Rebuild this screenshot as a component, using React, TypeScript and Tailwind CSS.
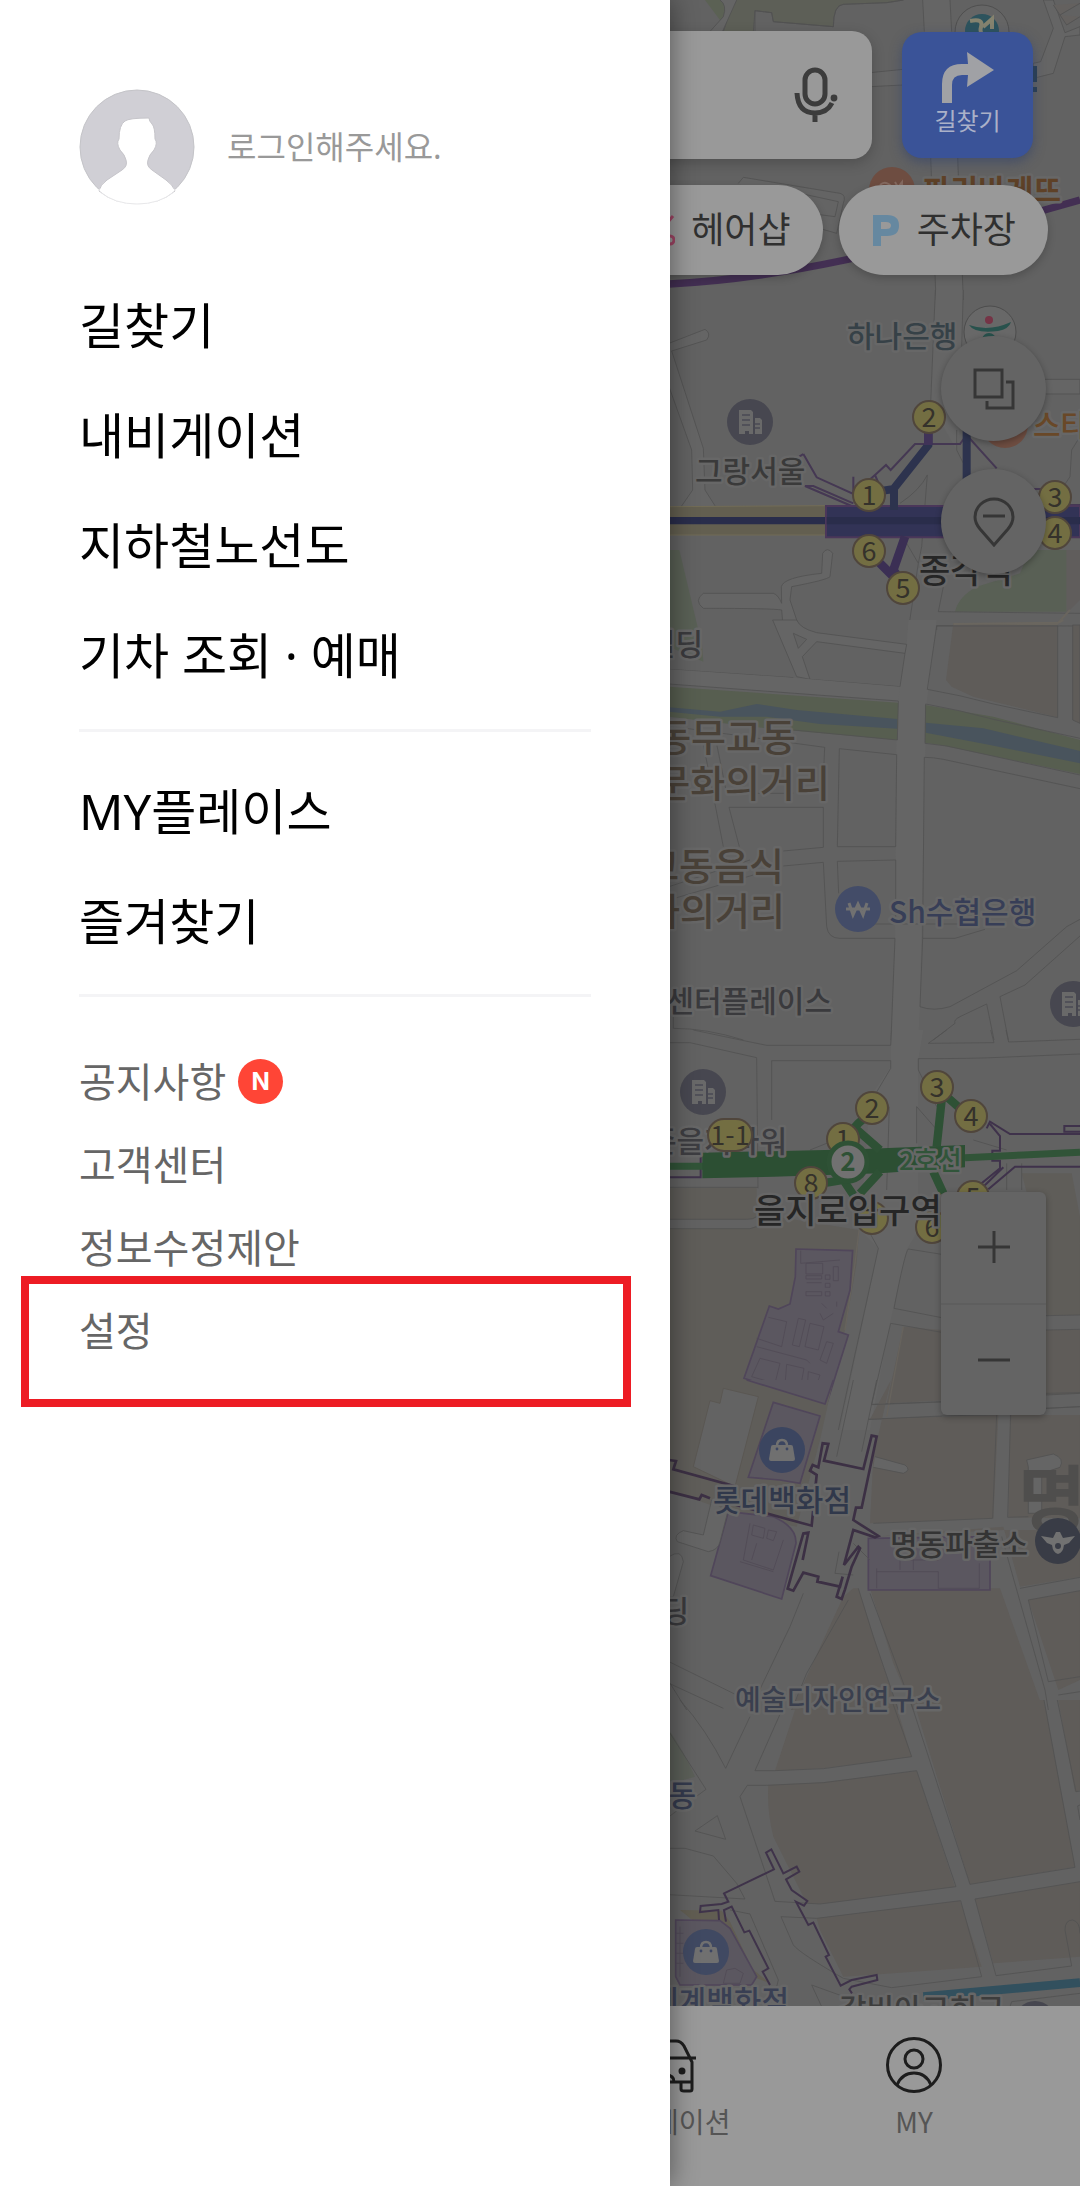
import type { ReactNode } from 'react'

const mainMenu = ['길찾기', '내비게이션', '지하철노선도', '기차 조회 · 예매']
const myMenu = ['MY플레이스', '즐겨찾기']

type Exit = { n: string; x: number; y: number }

const exits: Exit[] = [
  { n: '2', x: 929, y: 417 },
  { n: '1', x: 869, y: 495 },
  { n: '6', x: 869, y: 551 },
  { n: '5', x: 903, y: 588 },
  { n: '3', x: 1055, y: 497 },
  { n: '4', x: 1055, y: 533 },
  { n: '3', x: 937, y: 1087 },
  { n: '2', x: 872, y: 1108 },
  { n: '4', x: 971, y: 1116 },
  { n: '1', x: 843, y: 1139 },
  { n: '8', x: 811, y: 1183 },
  { n: '5', x: 973, y: 1197 },
  { n: '7', x: 872, y: 1218 },
  { n: '6', x: 932, y: 1227 },
]

type Label = { text: string; x: number; y: number; size: number; color: string; end?: boolean; bold?: boolean }

const labels: Label[] = [
  { text: '파리바게뜨', x: 923, y: 201, size: 30, color: '#5e4127', bold: true },
  { text: '하나은행', x: 847, y: 347, size: 30, color: '#364147' },
  { text: '그랑서울', x: 695, y: 482, size: 30, color: '#3a3a3a' },
  { text: '스타벅스', x: 1033, y: 436, size: 30, color: '#694828' },
  { text: '종각역', x: 919, y: 583, size: 34, color: '#262626' },
  { text: '빌딩', x: 703, y: 655, size: 30, color: '#3a3a3d', end: true },
  { text: '동무교동', x: 796, y: 751, size: 38, color: '#494138', end: true },
  { text: '문화의거리', x: 830, y: 797, size: 38, color: '#494138', end: true },
  { text: '교동음식', x: 784, y: 880, size: 38, color: '#494138', end: true },
  { text: '문화의거리', x: 785, y: 925, size: 38, color: '#494138', end: true },
  { text: 'Sh수협은행', x: 889, y: 923, size: 30, color: '#373e57' },
  { text: '센터플레이스', x: 832, y: 1012, size: 30, color: '#3a3a3d', end: true },
  { text: '존을지타워', x: 787, y: 1152, size: 30, color: '#3d3d41', end: true },
  { text: '롯데백화점', x: 713, y: 1511, size: 30, color: '#30384b' },
  { text: '명동파출소', x: 890, y: 1555, size: 30, color: '#343434' },
  { text: '빌딩', x: 689, y: 1622, size: 30, color: '#3a3a3d', end: true },
  { text: '예술디자인연구소', x: 735, y: 1710, size: 28, color: '#3a3f4e' },
  { text: '명동', x: 696, y: 1806, size: 30, color: '#343a4d', end: true },
  { text: '신세계백화점', x: 789, y: 2012, size: 30, color: '#393f53', end: true },
  { text: '갈비아고희구', x: 839, y: 2020, size: 30, color: '#3d3d3d' },
]

function MapLabel({ text, x, y, size, color, end, bold }: Label) {
  return (
    <text
      x={x}
      y={y}
      fontSize={size}
      fill={color}
      textAnchor={end ? 'end' : 'start'}
      fontWeight={bold ? 700 : 500}
      stroke="#676767"
      strokeWidth="5"
      strokeLinejoin="round"
      paintOrder="stroke"
    >
      {text}
    </text>
  )
}

function Pin({ x, y, color, children }: { x: number; y: number; color: string; children: ReactNode }) {
  return (
    <g transform={`translate(${x} ${y})`}>
      <circle r="23" fill={color} />
      {children}
    </g>
  )
}

const buildingIcon = (
  <>
    <path d="M-11-12H1L3-10V12H-1V9H-5V12H-11ZM5-4H10L12-2V12H5Z" fill="#696969" />
    <path d="M-8-7H0M-8-2H0M-8 3H0M5 2H10M5 6H10" stroke="#4a4a54" strokeWidth="1.6" />
  </>
)

const bagIcon = (
  <>
    <path d="M-9-5H9Q11-5 11-3L13 9Q13 11 11 11H-11Q-13 11-13 9L-11-3Q-11-5-9-5Z" fill="#707070" />
    <path d="M-5-4Q-5-10 0-10Q5-10 5-4" fill="none" stroke="#707070" strokeWidth="2.5" />
    <circle cx="-5" cy="-1" r="1.4" fill="#3c4663" />
    <circle cx="5" cy="-1" r="1.4" fill="#3c4663" />
  </>
)

function CityMap() {
  return (
    <svg
      className="absolute inset-0 h-full w-full"
      viewBox="0 0 1080 2186"
      preserveAspectRatio="xMaxYMin slice"
      aria-hidden="true"
    >
      <rect width="1080" height="2186" fill="#626262" />

      {/* north: park and search area */}
      <g transform="translate(640 0) scale(.33333)" stroke="#525252" strokeWidth="2.5" fill="#626262">
        <path d="M195 0L240 60L215 130L285 0Z" fill="#5b6154" stroke="none" />
        <path d="M280 0L250 95H340L345 32L395 38L400 65L580 80Q580 15 610 13L740 8L790 0" fill="#5d5f57" />
        <path d="M240 0Q262 15 250 50L205 100H245L290 0Z" fill="#656565" stroke="none" />
        <path d="M240 0Q262 15 250 50L205 100M290 0L245 100M345 95L345 32L395 38L400 65L580 80Q580 15 610 13L740 8L790 0" fill="none" />
        <path d="M848 0H930L970 900H888L870 470Z" fill="#656565" stroke="none" />
        <path d="M848 0L853 95M930 0L935 95M872 470L888 900M953 470L970 900" fill="none" />
        <path d="M690 218L790 208V255L690 260Z" fill="#656565" />
        <path d="M1180 190L1202 185L1240 85L1210 0H1240L1275 98L1320 80V105L1275 110L1240 220L1180 235Z" fill="#656565" />
        <path d="M1240 15L1260 45L1320 10M1260 45L1280 75L1320 50" fill="#64615f" />
        <path d="M295 550L310 532L600 580Q620 585 610 610L590 700L520 680M480 580L595 605L585 650L510 640" fill="#646464" />
        <path d="M87 852Q330 840 615 780T1320 600" fill="none" stroke="#432f53" strokeWidth="22" />
      </g>

      {/* Jonggak station */}
      <g transform="translate(640 290) scale(.33333)" stroke="#525252" strokeWidth="2.5" fill="none">
        <path d="M888 0H968V340L950 480L870 340Z" fill="#656565" stroke="none" />
        <path d="M886 0L872 340M970 0L965 170M950 420V480L970 520" />
        <path d="M87 290L155 480L158 600L120 655H230L195 600L190 475L95 183L200 150Q215 130 195 118L87 160Z" fill="#656565" />
        <path d="M1200 268H1320V312H1200" fill="#656565" />
        <path d="M1320 440L1295 480L1290 560L1250 620" />
        <path d="M87 780H118L175 1020H87Z" fill="#596055" stroke="none" />
        <path d="M430 1020L425 960Q400 955 190 955Q160 932 190 910H400Q415 915 425 940L424 890Q430 862 545 850L548 790Q562 768 578 790L570 860Q560 870 455 890L450 930L480 1020" fill="#656565" />
        <path d="M780 640Q840 600 862 555L845 770L835 820L800 760M835 820L805 1020" />
        <path d="M945 965Q955 920 1010 890L1140 850L1170 780H1280V965Z" fill="#596055" stroke="none" />
        <path d="M1280 780H1320V930L1280 970Z" fill="#605d5c" stroke="none" />
        <path d="M910 890L895 965L1320 970M890 1020V1007L1320 1008" />
        <path d="M940 1003H1250L1290 960" stroke="#69655e" strokeWidth="6" />
        <path d="M87 650L560 647H1320V735H87Z" fill="#635f50" stroke="#726c56" strokeWidth="3" />
        <path d="M635 648L495 588H520L640 640M490 492L530 562L640 612V560M640 612L705 555L738 525L752 540L825 462H960L980 435L1070 535M705 555L720 590M1180 597H1240V645H1320M490 492L478 500" stroke="#453853" strokeWidth="6" />
        <path d="M87 692H560" stroke="#292d4b" strokeWidth="22" />
        <path d="M558 648H1320V742H558Z" fill="#323356" stroke="#4b375a" strokeWidth="6" />
        <path d="M560 692H1320" stroke="#2a2d4b" strokeWidth="22" />
        <path d="M762 660V595L865 465V420M710 605L762 597M980 420V600" stroke="#2d334e" strokeWidth="24" />
        <path d="M795 740L760 840L790 880M715 815L760 860" stroke="#3b2f54" strokeWidth="26" />
        <path d="M865 465V420" stroke="#403358" strokeWidth="26" />
      </g>

      {/* Cheonggyecheon and Mugyo-dong */}
      <g transform="translate(640 620) scale(.33333)" stroke="#525252" strokeWidth="2.5" fill="#626262">
        <path d="M805 0H890L860 250L850 640L840 1160L835 1260H753L765 955L770 240L800 70Z" fill="#656565" stroke="none" />
        <path d="M398 0L470 170L510 178L487 110L530 65L795 100L800 73L530 38Q480 25 470 0Z" fill="#656565" />
        <path d="M460 40L500 58L475 85Z" />
        <path d="M87 80L190 125L185 60L150 0H87Z" fill="#596055" stroke="none" />
        <path d="M87 148L460 173M510 178L780 200L795 100" fill="none" />
        <path d="M87 148L460 173L780 200L775 243L87 192Z" fill="#656565" stroke="none" />
        <path d="M87 200L775 248L772 360L380 325L87 290Z" fill="#575e50" stroke="none" />
        <path d="M87 262L240 275L350 252L470 270L772 297V326L540 312L380 290L240 290L87 275Z" fill="#49545d" stroke="none" />
        <path d="M855 255L1060 290L1320 360V462L900 375L855 368Z" fill="#575e50" stroke="none" />
        <path d="M857 308L1030 325L1320 393V430L1050 375L857 338Z" fill="#49545d" stroke="none" />
        <path d="M940 10L1253 18V292L1000 230L935 200L918 180Z" fill="#5f5c59" stroke="none" />
        <path d="M1298 15H1320V310L1298 300Z" fill="#5f5c59" />
        <path d="M87 192L775 243L772 360L460 330M862 208Q960 225 1060 252L1253 293V18H890L862 208M857 252Q960 270 1060 298L1320 355M857 252L855 370L920 378L1320 465M1320 506L910 418Q880 412 853 412L848 955L945 955L1035 928" fill="none" />
        <path d="M940 12L1255 8L1270 0" stroke="#6a665f" fill="none" strokeWidth="6" />
        <path d="M87 318L480 372L554 382L552 430M598 386L770 404L767 680H592ZM592 724L767 720V900M592 724L596 820M267 562H550V682L430 693M267 562L298 680M430 738L550 727L560 920Q565 955 600 955H765L753 1260M848 955L840 1160Q880 1175 930 1160L1130 1052L1280 920L1320 898M880 1260L945 1210Q940 1200 960 1190L1040 1152L1062 1260M1105 1260L1080 1130L1155 1095L1320 948" fill="none" />
        <path d="M190 372L250 680M230 372L260 520H460M87 800L330 720M87 840L340 765M700 912H970M100 1180V1225Q200 1225 310 1260" fill="none" />
      </g>

      {/* Euljiro 1-ga */}
      <g transform="translate(640 1030) scale(.33333)" stroke="#525252" strokeWidth="2.5" fill="none">
        <path d="M753 0L752 110L690 200L660 600L715 655L600 1200H690L750 880L800 660L835 600V90L850 0Z" fill="#656565" stroke="none" />
        <path d="M87 475L350 472V560L340 568H87ZM87 596H330L410 560L657 600L650 700L615 900L555 1120L540 1200L87 1200Z" fill="#5f5d59" stroke="none" />
        <path d="M1145 430H1295L1320 560V855H1220L1200 640Z" fill="#5f5d59" stroke="none" />
        <path d="M790 890L905 900H1320V1090L740 1120Z" fill="#5f5c59" stroke="none" />
        <path d="M160 0Q300 30 380 46H752L755 0M87 38H150L350 83L354 475M395 270V92H752V115L690 220M865 40L920 0M1052 0L1062 38L865 40M1098 0L1106 36L1320 28M835 86Q1000 86 1080 82L1320 72M835 86V120L890 230M748 230L740 480M830 230V340M510 360L660 300M830 230L900 310M87 472H354M87 568H320Q340 568 350 560M87 596H330Q360 590 380 575M690 610L715 655L595 1200M1000 330L1100 360M1100 400V480M1145 400V480" />
        <path d="M905 673L805 657Q795 665 762 835L905 863M905 907L752 880L695 1123L905 1115M685 1168L905 1160M1218 857L1320 855M1218 900L1320 898M1218 1095L1320 1090M1218 1135L1320 1130M1070 1150V1200M1112 1150V1200" />
        <path d="M657 600L645 700L615 900M790 890L740 1160" stroke="#67635d" strokeWidth="4" />
        <path d="M468 657L638 662L630 780L595 905L625 915L560 1122L312 1045L388 828L415 837L450 822L466 740Z" fill="#5b5760" stroke="#50465a" strokeWidth="5" />
        <path d="M498 700H548V732H498ZM498 737H545V747H498ZM556 735H570V748H556ZM580 710H595V752H580ZM500 758H545M556 760H570V772H556ZM498 785H545V797H498ZM556 785H570V798H556ZM482 662V700L600 690M385 862L440 875L425 950L350 925M475 865L497 870L478 950L457 945ZM510 880L552 890L535 960L495 950ZM560 935L580 940L560 1000L540 990ZM360 985L420 1000L405 1060L335 1040ZM440 1003L492 1015L480 1080L435 1065ZM505 1025L540 1035L530 1065L503 1055ZM350 950L500 990L510 1000M540 850L550 870L580 850M545 820L560 835M590 815V830" stroke="#514a56" />
        <path d="M250 1075L355 1105L330 1200H200L215 1110L243 1118Z" fill="#626262" stroke="#57534c" />
        <path d="M400 1117L540 1160L530 1200H372Z" fill="#5b5760" stroke="#50465a" strokeWidth="5" />
        <path d="M87 442H182V370M1040 295L1050 275L1110 312H1320M1320 305H1273V288H1320M1050 282L1080 318V362H1057V392H1080V415L1000 480M1320 410H1125L1045 478M1090 412L1030 470" stroke="#3f324b" strokeWidth="6" />
        <path d="M87 409H190M975 383L1150 375L1320 367" stroke="#315438" strokeWidth="21" />
        <path d="M187 368L650 358L975 345V412L720 430L400 440L187 445Z" fill="#2c4f33" stroke="none" />
        <path d="M600 340L655 280L690 250M640 290L720 360M905 210L890 350M920 200L960 235M560 458L610 450L640 495M720 425L660 490M880 425L910 490" stroke="#2e5135" strokeWidth="25" />
      </g>

      {/* Lotte department store, Myeongdong */}
      <g transform="translate(640 1380) scale(.33333)" stroke="#525252" strokeWidth="2.5" fill="none">
        <path d="M87 0H580L540 180L470 440L280 400L87 330Z" fill="#5f5d59" stroke="none" />
        <path d="M250 25L355 50L285 320L160 260L210 62L240 70Z" fill="#636363" stroke="#595650" />
        <path d="M753 0L700 230L690 430L1060 415L1075 105L690 118M1110 105H1320V415L1105 412Z" fill="#5f5c59" stroke="none" />
        <path d="M700 470L1090 440L1140 620L1320 590V450H1090M1165 660L1320 632V900L1255 930ZM610 650L640 625H655L740 890L775 990H455Q540 800 610 650ZM690 625H1080L1210 990H820L760 850Z" fill="#5f5c59" stroke="none" />
        <path d="M640 0L590 230M710 0L665 215M695 74L903 66M685 118L903 108L1070 104L1058 415L700 430M1112 104L1103 412L1165 410M1218 40L1320 38M1218 85L1320 80M490 640L450 740L330 990M625 660L500 880L455 990M655 625L700 770L775 990M690 640L820 990M1085 470L1215 930L1225 990M1140 625L1320 592M1165 660L1320 632M1165 660L1225 905L1320 890M1255 945L1320 935M87 845L300 950M87 910L250 985M87 905L140 990" />
        <path d="M320 0L555 72L580 0M400 67L540 108L480 310L420 300L325 292Z" fill="#5b5760" stroke="#50465a" strokeWidth="5" />
        <path d="M265 395L400 410Q470 440 468 490L425 657L212 587Z" fill="#5b5760" stroke="#50465a" strokeWidth="5" />
        <path d="M685 475L1050 470V630H685Z" fill="#5b5760" stroke="#50465a" strokeWidth="5" />
        <path d="M340 435L375 445L370 475L335 465ZM385 450L410 455L400 482L380 475ZM330 430L310 540L400 570L430 480M300 545L400 575M350 490L335 540M710 565V625M710 575H895V625H1018V550M780 570V540H895M820 520V570" stroke="#514a56" />
        <path d="M705 230L795 255Q815 270 790 280L700 262M1160 240L1240 222Q1275 235 1260 262L1205 280V400H1165V260Z" fill="#656565" />
        <path d="M215 360L190 465L130 452Q98 465 112 485L205 515Q235 510 240 485L262 400M87 530Q125 505 130 545L100 650H87" fill="#656565" />
        <path d="M597 515L585 580L640 585M640 490L690 540" />
        <path d="M87 240L108 243L100 268L290 320M87 335L178 358L185 345L210 355M270 370L515 437L530 285L510 272L518 255L535 262L548 190L565 192L552 242L670 267L695 167L710 170L665 383H648L640 420L715 468L705 472L640 450L612 555L655 500L660 505L635 560L615 628L605 657L590 650L608 590L600 620L532 605L535 590L490 578L460 632L443 626L490 460L505 458L488 540" stroke="#3c3044" strokeWidth="8" />
      </g>

      {/* Shinsegae and south */}
      <g transform="translate(640 1700) scale(.33333)" stroke="#525252" strokeWidth="2.5" fill="#5f5c59">
        <path d="M465 30L770 20L815 170L550 205L405 212ZM385 255L550 247L830 213L945 560L540 612L500 610L400 410Q380 330 385 255ZM820 0H1212L1305 500L990 553ZM1255 0H1320V270L1305 275ZM530 655L960 602L1025 800L760 820L610 830L540 690ZM1005 597L1320 545V770L1060 790Z" stroke="none" />
        <path d="M87 90Q130 150 165 230L130 240L87 245Z" fill="#5b5f58" stroke="none" />
        <path d="M120 0Q200 90 257 205L330 50M430 20L345 212L405 212L550 206L815 170L755 0M87 95L198 268L87 350M165 393L232 347L257 418ZM87 445H135L220 468L290 550L315 597L87 584M322 256H380L550 248L830 212L948 560L540 612L405 604L300 290ZM810 0L990 553L1305 502L1212 0M1252 0L1308 275L1320 273M1320 315L1313 318L1320 360M1005 597L1320 545M1005 597L1068 827L1295 798L1275 690Q1275 660 1298 660Q1320 665 1320 700M962 602L1025 830L755 863L610 835Q480 760 460 735L423 650L530 655L962 602M270 630L330 642L415 840L410 860M515 855L640 900M515 855L545 920M1115 905L1320 880M1115 905L1110 920" fill="none" />
        <path d="M120 630L245 632L270 665L350 835L390 850" fill="#615d52" stroke="none" />
        <path d="M107 660L240 662L270 685L350 830L335 855H120L107 830Z" fill="#5b5760" stroke="#50465a" strokeWidth="5" />
        <path d="M120 680V830M107 700H130M107 730H130M107 760H130M107 790H130M260 810L285 805L310 820L300 850H250Z" fill="none" stroke="#514a56" />
        <path d="M390 855L368 815L385 805L328 692L313 697L275 620L252 630L258 665M237 660L235 630L180 636L182 618L245 612L265 605L252 580L402 508L378 458L394 448L430 520L470 500L478 515L438 538L455 570L502 603L492 617L468 605L505 675L520 668L567 765L557 770L602 857L635 840L710 825L712 840L635 860L628 868L636 880" fill="none" stroke="#3f334a" strokeWidth="6" />
        <path d="M850 890Q1080 870 1320 848" fill="none" stroke="#32505e" strokeWidth="26" />
        <circle cx="1185" cy="965" r="62" fill="#46464f" stroke="none" />
      </g>

      {/* brand markers */}
      <circle cx="982" cy="32" r="27" fill="#656565" stroke="#4f4f4f" />
      <circle cx="982" cy="31" r="17" fill="#2d535d" />
      <path d="M970 21Q984 18 981 27T993 40M983 27L992 19V29" fill="none" stroke="#85836f" strokeWidth="4" />
      <path d="M1035 66V82M1035 87V92" stroke="#2b3f52" strokeWidth="4" />
      <circle cx="892" cy="190" r="23" fill="#6e4d41" />
      <path d="M880 185Q885 180 891 186M895 182L898 187L902 182V187" fill="none" stroke="#856a60" strokeWidth="2" />
      <circle cx="990" cy="332" r="26" fill="#686868" stroke="#4d4d4d" />
      <circle cx="989" cy="320" r="4" fill="#753446" />
      <path d="M969 325Q989 332 1011 322Q1009 329 998 331Q975 334 969 325Z" fill="#28524d" />
      <circle cx="989" cy="340" r="7" fill="#28524d" />
      <circle cx="1005" cy="425" r="23" fill="#6e4d41" />

      <Pin x={750} y={422} color="#474750">{buildingIcon}</Pin>
      <Pin x={703} y={1092} color="#474750">{buildingIcon}</Pin>
      <Pin x={1073} y={1004} color="#474750">{buildingIcon}</Pin>
      <Pin x={858} y={909} color="#434c68">
        <path d="M-9-6L-5 6L0-5L5 6L9-6M-12 0H12" fill="none" stroke="#717171" strokeWidth="3" />
      </Pin>
      <Pin x={782} y={1450} color="#3b4560">{bagIcon}</Pin>
      <Pin x={706} y={1952} color="#404962">{bagIcon}</Pin>
      <text x="1018" y="1527" fontSize="74" fontWeight="700" fill="#4f4e4d">명동</text>
      <Pin x={1058} y={1541} color="#393c46">
        <path d="M-17-5L-5-3L-2-9H2L5-3L17-5L11 2L6 4Q5 12 0 13Q-5 12-6 4L-11 2Z" fill="#717171" />
        <circle cy="5" r="3" fill="#393c46" />
      </Pin>

      {labels.map((l) => (
        <MapLabel key={l.text + l.y} {...l} />
      ))}

      {exits.map((e) => (
        <g key={`${e.x}-${e.y}`}>
          <circle cx={e.x} cy={e.y} r="16" fill="#736e42" stroke="#50463c" strokeWidth="2" />
          <text x={e.x} y={e.y + 10} fontSize="27" textAnchor="middle" fill="#35322b">{e.n}</text>
        </g>
      ))}
      <rect x="708" y="1119" width="44" height="32" rx="16" fill="#736e42" stroke="#50463c" strokeWidth="2" />
      <text x="730" y="1145" fontSize="27" textAnchor="middle" fill="#35322b">1-1</text>
      <circle cx="848" cy="1162" r="19" fill="#717171" stroke="#2e5135" strokeWidth="5" />
      <text x="848" y="1171" fontSize="26" fontWeight="700" textAnchor="middle" fill="#2e5135">2</text>
      <MapLabel text="2호선" x={899} y={1170} size={26} color="#31553a" />
      <MapLabel text="을지로입구역" x={754} y={1223} size={34} color="#262626" />
    </svg>
  )
}

function TopBar() {
  return (
    <header className="relative flex items-center gap-[30px] pt-[31px] pr-[47px] pl-8">
      <form className="flex h-32 flex-1 items-center rounded-[20px] bg-[#999999] pr-[34px] shadow-[0_4px_14px_rgba(0,0,0,0.2)]">
        <input aria-label="장소 검색" className="h-full min-w-0 flex-1 bg-transparent px-8 text-4xl outline-none" />
        <button type="button" aria-label="음성 검색">
          <svg width="44" height="56" viewBox="0 0 44 56" fill="none" stroke="#3c3c3c" strokeWidth="5">
            <rect x="11" y="3" width="20" height="34" rx="10" />
            <path d="M3 26Q4 46 21 46Q33 46 38 36M21 46V55" />
            <circle cx="40" cy="31" r="3.4" fill="#3c3c3c" stroke="none" />
          </svg>
        </button>
      </form>
      <button className="flex h-[126px] w-[131px] flex-col items-center rounded-[20px] bg-[#3a5398] pt-5 shadow-[0_4px_12px_rgba(40,60,110,0.5)]">
        <svg width="54" height="52" viewBox="0 0 54 52">
          <path d="M1 51V32Q1 12 21 12H27L26 0L53 18L26 35L27 23H21Q11 23 11 33V51Z" fill="#a0a1a5" />
        </svg>
        <span className="text-2xl text-[#aab1c8]">길찾기</span>
      </button>
    </header>
  )
}

function Chips() {
  return (
    <div className="relative mt-[26px] flex justify-end gap-4 pr-8">
      <button className="flex h-[90px] items-center gap-4 rounded-full bg-[#999999] px-8 text-4xl text-[#303030] shadow-[0_3px_8px_rgba(0,0,0,0.2)]">
        <svg width="28" height="32" viewBox="0 0 28 32" fill="none" stroke="#a04565" strokeWidth="3">
          <path d="M4 2L21 22M26 2L9 22" />
          <circle cx="6" cy="26" r="4" />
          <circle cx="23" cy="26" r="4" />
        </svg>
        <span className="pb-1.5">헤어샵</span>
      </button>
      <button className="flex h-[90px] items-center gap-4 rounded-full bg-[#999999] px-8 text-4xl text-[#303030] shadow-[0_3px_8px_rgba(0,0,0,0.2)]">
        <svg width="30" height="32" viewBox="0 0 30 32">
          <path d="M2 1H16Q28 1 28 11.500Q28 22 16 22H10V32H2ZM10 8V15H15Q20 15 20 11.500Q20 8 15 8Z" fill="#6688a0" fillRule="evenodd" />
        </svg>
        <span className="pb-1.5">주차장</span>
      </button>
    </div>
  )
}

function MapControls() {
  return (
    <div className="relative mt-[61px] flex flex-col items-end pr-[34px]">
      <button aria-label="레이어" className="flex size-[105px] items-center justify-center rounded-full bg-[#646464] shadow-[0_2px_6px_rgba(0,0,0,0.3)]">
        <svg width="42" height="42" viewBox="0 0 42 42" fill="none" stroke="#363636" strokeWidth="3">
          <path d="M2 2H29V29H2ZM33 14H40V40H14V33" />
        </svg>
      </button>
      <button aria-label="장소 숨기기" className="mt-7 flex size-[105px] items-center justify-center rounded-full bg-[#646464] shadow-[0_2px_6px_rgba(0,0,0,0.3)]">
        <svg width="42" height="50" viewBox="0 0 42 50" fill="none" stroke="#363636" strokeWidth="3">
          <path d="M21 48L7 32Q2 26 2 20A19 18 0 0 1 40 20Q40 26 35 32ZM10 19H32" />
        </svg>
      </button>
      <div className="mt-[618px] flex h-[223px] w-[105px] flex-col divide-y-2 divide-[#5e5e5e] rounded-md bg-[#646464] shadow-[0_2px_6px_rgba(0,0,0,0.3)]">
        <button aria-label="확대" className="flex flex-1 items-center justify-center">
          <svg width="32" height="32" viewBox="0 0 32 32" stroke="#363636" strokeWidth="3">
            <path d="M0 16H32M16 0V32" />
          </svg>
        </button>
        <button aria-label="축소" className="flex flex-1 items-center justify-center">
          <svg width="32" height="32" viewBox="0 0 32 32" stroke="#363636" strokeWidth="3">
            <path d="M0 16H32" />
          </svg>
        </button>
      </div>
    </div>
  )
}

function BottomTabs() {
  return (
    <nav className="relative mt-auto flex h-[180px] justify-end bg-[#999999] pt-[30px] pr-[42px] text-[28px] leading-[42px] text-[#555555]">
      <a href="#navi" className="flex w-[248px] flex-col items-center gap-1.5">
        <svg width="60" height="58" viewBox="0 0 60 58" fill="none" stroke="#1d1d1d" strokeWidth="3">
          <path d="M5 46V26L13 10Q15 5 20 5H40Q45 5 48 10L56 26V46ZM0 22L60 22M5 46V53Q5 55 8 55H14Q16 55 16 53V46M45 46V53Q45 55 48 55H54Q56 55 56 53V46M22 46Q22 39 30 39Q38 39 38 46" />
          <circle cx="15" cy="35" r="2" fill="#1d1d1d" />
          <circle cx="46" cy="35" r="2" fill="#1d1d1d" />
        </svg>
        내비게이션
      </a>
      <a href="#my" className="flex w-[248px] flex-col items-center gap-1.5">
        <svg width="58" height="58" viewBox="0 0 58 58" fill="none" stroke="#1d1d1d" strokeWidth="3">
          <circle cx="29" cy="29" r="26.500" />
          <circle cx="29" cy="23" r="9" />
          <path d="M12 49Q17 37 29 37Q41 37 46 49" />
        </svg>
        MY
      </a>
    </nav>
  )
}

function Drawer() {
  return (
    <aside className="relative col-start-1 row-start-1 w-[62%] bg-white px-[79px] pt-[89px] font-['Noto_Sans','Noto_Sans_CJK_KR',sans-serif] shadow-[2px_0_24px_rgba(0,0,0,0.4)]">
      <a href="#login" className="flex items-center gap-8 text-[32px] text-[#999999]">
        <svg width="116" height="116" viewBox="0 0 116 116">
          <circle cx="58" cy="58" r="57" fill="#d0cfd5" stroke="#c4c4c8" />
          <path
            d="M20 102Q21 96 28 91L43 81Q49 77 47 71Q46 66 41 61Q37 54 40 50Q40 36 46 32Q50 29 70 29Q70 32 73 35Q76 38 76 50Q79 54 75 61Q70 66 69 71Q67 77 73 81L87 91Q94 96 96 102Q80 115 58 115Q36 115 20 102Z"
            fill="#ffffff"
            stroke="#c6c5ca"
          />
          <path d="M20 101Q36 116 58 116Q80 116 96 101L90 96H26Z" fill="#ffffff" />
          <path d="M21 103Q36 115 58 115Q80 115 95 103" fill="none" stroke="#e8e8ea" />
        </svg>
        로그인해주세요.
      </a>

      <nav className="mt-[65px] flex flex-col text-[49px] leading-[110px] text-black">
        {mainMenu.map((item) => (
          <a key={item} href="#menu">{item}</a>
        ))}
        <hr className="mt-[19px] mb-6 border-t-[3px] border-[#f4f4f6]" />
        {myMenu.map((item) => (
          <a key={item} href="#my">{item}</a>
        ))}
        <hr className="mt-[18px] border-t-[3px] border-[#f4f4f6]" />
      </nav>

      <ul className="mt-[43px] text-[40px] leading-[83px] text-[#666666]">
        <li>
          <a href="#notice" className="flex items-center gap-3">
            공지사항
            <span className="flex size-[45px] items-center justify-center rounded-full bg-[#ff4536] font-['Inter',sans-serif] text-2xl font-bold text-white">
              N
            </span>
          </a>
        </li>
        <li><a href="#help">고객센터</a></li>
        <li><a href="#report">정보수정제안</a></li>
        <li className="-mt-[13px] -mr-10 -ml-[58px] h-[131px] border-8 border-[#ed1c24] pt-[5px] pl-[50px]">
          <a href="#settings" className="block">설정</a>
        </li>
      </ul>
    </aside>
  )
}

export default function App() {
  return (
    <div className="grid min-h-screen overflow-hidden font-['Noto_Sans_CJK_KR',sans-serif]">
      <main className="relative col-start-1 row-start-1 flex flex-col">
        <CityMap />
        <TopBar />
        <Chips />
        <MapControls />
        <BottomTabs />
      </main>
      <Drawer />
    </div>
  )
}
